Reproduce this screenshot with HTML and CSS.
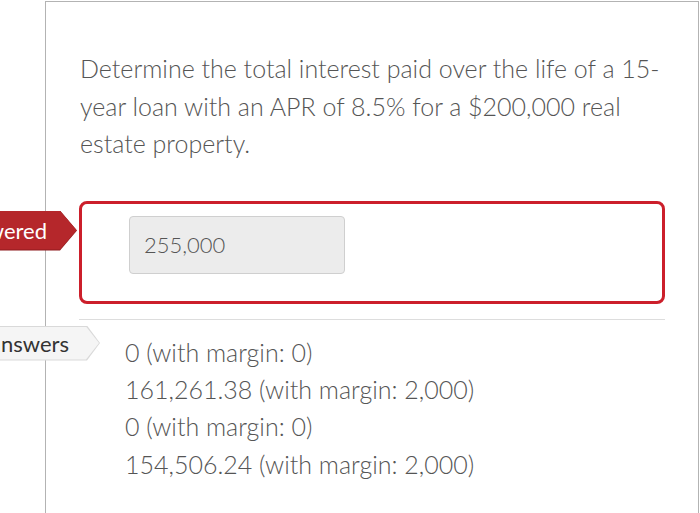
FILE: index.html
```html
<html lang="en">
<head>
    <meta charset="UTF-8">
    <meta name="viewport" content="width=device-width, initial-scale=1.0">
    <title>Question Result</title>
    <link rel="stylesheet" href="styles.css">
</head>
<body>

<div class="card">
    <p class="prompt">Determine the total interest paid over the life of a 15-<wbr>year loan with an APR of 8.5% for a $200,000 real estate property.</p>

    <div class="response">
        <span class="tag tag-wrong"><span class="tag-label">Answered</span></span>
        <div class="answer-box">
            <div class="answer-field">255,000</div>
        </div>
    </div>

    <div class="correct">
        <span class="tag tag-correct"><span class="tag-label">Correct answers</span></span>
        <ul class="answers">
            <li>0 (with margin: 0)</li>
            <li>161,261.38 (with margin: 2,000)</li>
            <li>0 (with margin: 0)</li>
            <li>154,506.24 (with margin: 2,000)</li>
        </ul>
    </div>
</div>

</body>
</html>
```

FILE: styles.css
```css
body {
    margin: 0;
    font-family: Lato, "Open Sans", sans-serif;
    font-weight: 300;
    background-color: white;
    color: #555;
    overflow: hidden;
}
.card {
    margin: 1px 1px 0 45px;
    height: 520px;
    border: 1px solid #b3b3b3;
    border-bottom: none;
    padding: 48px 33px 0 33px;
    box-sizing: border-box;
}
.prompt {
    margin: 0 0 38px 1px;
    font-size: 25px;
    line-height: 37.5px;
    color: #555;
}

.response {
    position: relative;
    padding-bottom: 15px;
    border-bottom: 1px solid #ddd;
}
.answer-box {
    border: 3px solid #cc1f2b;
    border-radius: 8px;
    padding: 12px 47px 27px 47px;
}
.answer-field {
    width: 216px;
    height: 58px;
    box-sizing: border-box;
    padding-left: 14px;
    background-color: #ececec;
    border: 1px solid #cfcfcf;
    border-radius: 4px;
    font-size: 22px;
    line-height: 56px;
    color: #555;
}

.correct {
    position: relative;
    padding: 14px 0 0 46px;
}
.answers {
    list-style: none;
    margin: 0;
    padding: 0;
    font-size: 25px;
    line-height: 37.4px;
}

/* labels that hang over the left edge of the card */
.tag {
    position: absolute;
    display: flex;
    white-space: nowrap;
    font-size: 22px;
    font-weight: 400;
    clip-path: polygon(0 0, calc(100% - 17px) 0, 100% 50%, calc(100% - 17px) 100%, 0 100%);
}
.tag-label {
    display: block;
    flex: 1;
}
.tag-wrong {
    top: 10px;
    right: calc(100% + 2px);
    height: 40px;
    background-color: #8e1b1e;
}
.tag-wrong .tag-label {
    margin-bottom: 1px;
    line-height: 39px;
    padding: 0 30px 0 20px;
    background-color: #b5272b;
    color: white;
    clip-path: polygon(0 0, calc(100% - 17px) 0, 100% 50%, calc(100% - 17px) 100%, 0 100%);
}
.tag-correct {
    top: 6px;
    right: calc(100% - 21px);
    height: 35px;
    background-color: #d9d9d9;
    clip-path: polygon(0 0, calc(100% - 13px) 0, 100% 50%, calc(100% - 13px) 100%, 0 100%);
}
.tag-correct .tag-label {
    margin: 1px 1px 1px 0;
    line-height: 33px;
    padding: 0 30px 0 20px;
    background-color: #f5f5f5;
    color: #333;
    clip-path: polygon(0 0, calc(100% - 13px) 0, 100% 50%, calc(100% - 13px) 100%, 0 100%);
}
```
